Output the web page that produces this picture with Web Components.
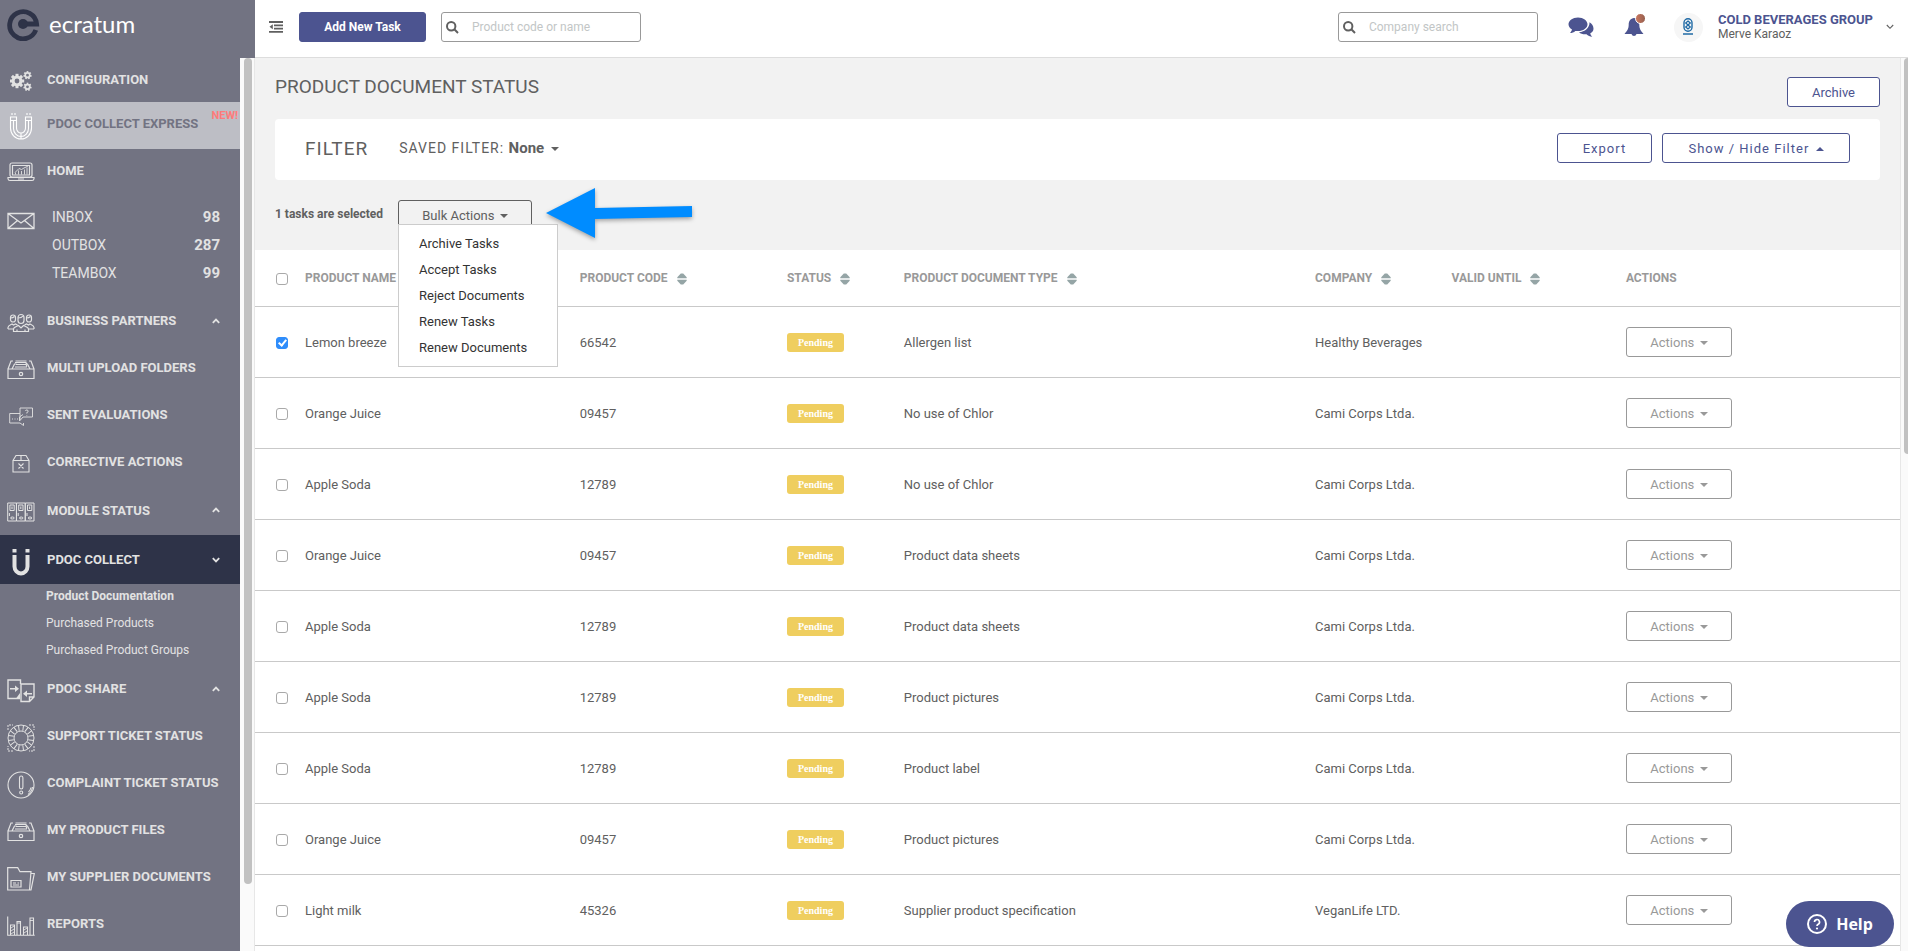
<!DOCTYPE html>
<html lang="en">
<head>
<meta charset="utf-8">
<title>Product document status</title>
<style>
  html, body { margin: 0; height: 100%; }
  body {
    font-family: Roboto, "Liberation Sans", sans-serif;
    font-size: 13px;
    color: #606060;
    overflow: hidden;
    --slate: #727382;
    --navy: #2e3348;
    --indigo: #4c5490;
    --panel: #f2f2f2;
    --line: #c9c9c9;
  }
</style>
</head>
<body>
<ecratum-app></ecratum-app>

<script>
const define = (name, html) => customElements.define(name, class extends HTMLElement {
  constructor() {
    super();
    this.attachShadow({ mode: 'open' });
  }
  connectedCallback() {
    const t = document.createElement('template');
    t.innerHTML = typeof html === 'function' ? html(this) : html;
    this.shadowRoot.replaceChildren(t.content.cloneNode(true));
  }
});

const gear = (cx, cy, r, hole, teeth, w) => {
  let s = '';
  for (let i = 0; i < teeth; i++)
    s += `<rect x="${cx - w / 2}" y="${cy - r - w * .6}" width="${w}" height="${w}" fill="currentColor" stroke="none" transform="rotate(${i * 360 / teeth} ${cx} ${cy})"/>`;
  return s + `<circle cx="${cx}" cy="${cy}" r="${(r + hole) / 2}" stroke-width="${r - hole}"/>`;
};
const drawer = '<path d="M1 9h26v9.500H1zM1 9l3-8h2M27 9l-3-8h-2M5 9l2.500-5h2M23 9l-2.500-5h-2M8 2.500h11l1 2M8.500 1h11M9 4.500h10l1 2M8 7h12" /><circle cx="14" cy="14" r="1.700"/>';
const binder = x => `<path d="M${x} 1h8.700v18h-8.700z"/><path d="M${x + 2.2} 3h4.300v5.500h-4.300zM${x + 4.3} 4.500v2.500"/><path d="M${x + 1.700} 11v3" /><ellipse cx="${x + 4.700}" cy="16" rx="1.800" ry="1"/>`;
let spokes = '';
for (let a = 0; a < 360; a += 45) spokes += `<path d="M12.200 6.800 11.500 1.500M15.800 6.800 16.500 1.500" transform="rotate(${a} 14 14)"/>`;

/* name: [width, height, stroke width, markup] */
const ICONS = {
  gears: [22, 20, 1, gear(7, 10, 5.4, 2.4, 8, 3) + gear(17.500, 4.200, 3.1, 1.400, 7, 1.700) + gear(17.500, 15.800, 3.1, 1.400, 7, 1.700)],
  magnet: [24, 28, 1.100, '<path d="M1.500 5v11a10.500 11 0 0 0 21 0V5h-6v11a4.500 5 0 0 1-9 0V5zM1.500 8.500h6M16.500 8.500h6M4.500 9v7.500a7.500 8 0 0 0 15 0V9M12 20.500V27M3 3V1M6 3V1M18 3V1M21 3V1"/>'],
  magnetSolid: [18, 28, 1, '<path d="M.500 1h4v3.500h-4zM13.500 1h4v3.500h-4z" fill="currentColor" stroke="none"/><path d="M2.500 7v11.500a6.500 7 0 0 0 13 0V7" stroke-width="4"/>'],
  laptop: [28, 20, 1.200, '<rect x="3" y="1" width="22" height="14" rx="2"/><path d="M5.500 3.500h17v9.500h-17zM1 15.500h26v1.200a2 2 0 0 1-2 1.800H3a2 2 0 0 1-2-1.800zM11 17h6"/><path d="M8 10.500l4-4 2.500 1 2.500-1.500 4-2M8.500 12.500v-2M11.500 12.500v-4M14.500 12.500v-3.500M17.500 12.500v-5M20 12.500v-7" stroke-width=".9"/>'],
  mail: [28, 18, 1.300, '<path d="M1 1.500h26v15H1zM1 1.500l13 9.500 13-9.500M1 16.500l9.500-8M27 16.500l-9.500-8"/>'],
  people: [28, 20, 1.200, '<rect x="3.500" y="2" width="5" height="7" rx="2.500"/><rect x="19.500" y="2" width="5" height="7" rx="2.500"/><rect x="11" y="1.500" width="6" height="9" rx="3"/><path d="M11 5c2 0 4-.5 5-2M3.500 5c2 0 3-.5 4-1.500M19.500 5c2 0 3-.5 4-1.500M1 16v-1.500c0-2 2-2.500 4-3.500l1.500 1 2-1 2 1M27 16v-1.500c0-2-2-2.500-4-3.500l-1.500 1-2-1-2 1M1 16h5.500M27 16h-5.500M6.500 18.500V16c0-2 3-2.500 5-3.500l2.500 2.500 2.500-2.500c2 1 5 1.500 5 3.500v2.500zM10 18v-1.500M18 18v-1.500"/>'],
  drawer: [28, 20, 1.200, drawer],
  chat: [24, 20, .9, '<path d="M11 6.500H.700v9.500H11l3.500 2.500V16M10.500 14V10L14 7.500M11 6.500V1h12.500v9H14l-3 3.500V6.500"/><path d="M3 12h1M5.500 12h1M8 12h1M16.500 4a1.300 1.300 0 1 1 1.300 1.500v1M17.800 8v.6" />'],
  box: [18, 20, 1.100, '<path d="M1 6.500h16V18H1zM1 6.500 4 1.500h10l3 5M9 1.500v5M6.500 9.500l5 5M11.500 9.500l-5 5"/>'],
  binders: [28, 20, 1, binder(.7) + binder(9.500) + binder(18.300)],
  share: [28, 24, 1.400, '<path d="M13 19.500H1V1h12.500v4M14 5h13v13l-4.500 4.500H14zM22.500 22v-4H27"/><path d="M3 9.800h6M25 14.800h-6" stroke-width="1.600"/><path d="M8 6.500v6.500l4-3.300zM20 11.500V18l-4-3.200zM13 14v5.500l-4 0z" fill="currentColor" stroke="none"/>'],
  lifebuoy: [28, 28, 1, '<circle cx="14" cy="14" r="13"/><circle cx="14" cy="14" r="7"/>' + spokes + '<path d="M1 6V1h5M22 1h5v5M27 22v5h-5M6 27H1v-5" stroke-dasharray="2 1"/>'],
  alert: [28, 28, 1.100, '<circle cx="14" cy="14" r="13"/><rect x="12.500" y="5" width="3.400" height="13" rx="1.700"/><circle cx="14.200" cy="21.500" r="1.500"/><path d="M25.500 16a11 11 0 0 1-4.500 7.500M24 16.500a9 9 0 0 1-2.500 4.500"/>'],
  folder: [28, 24, 1.200, '<path d="M.700 23V.700h10l2.300 4h11L22.500 23zM24 6.500h3.300L24 23h-1.500"/><path d="M4 13.500h10v6.500H4zM6 16h3M10.500 16h1.500M6 18h6"/>'],
  bars: [28, 20, 1.100, '<path d="M.700.500v18.800h27M3.500 19V9h4v10M10 19V5.500h3.500V19M16.500 19v-8h4v8M23 19V2h3.500v17"/><path d="M4 12l3-2M4 15l3-2M4 18l3-2M17 14l3-2M17 17l3-2M10 7h4M23 4.500h3.500" stroke-width=".9"/>'],
  up: [8, 6, 1.800, '<path d="M.8 4.800 4 1.500l3.200 3.300"/>'],
  down: [8, 6, 1.800, '<path d="M.8 1.200 4 4.500l3.200-3.300"/>'],
  thinDown: [8, 6, 1.100, '<path d="M.8 1 4 4.300 7.200 1"/>'],
  outdent: [14, 12, 1.800, '<path d="M0 1h14M5 4.300h9M5 7.600h9M0 10.900h14"/><path d="M3.800 3.300v5L.5 5.800z" fill="currentColor" stroke="none"/>'],
  search: [13, 13, 2, '<circle cx="5.200" cy="5.200" r="4.200"/><path d="M8.300 8.300 12 12"/>'],
  comments: [26, 21, 1, '<g fill="currentColor" stroke="none"><path d="M10 .5C4.700.5.500 3.500.500 7.300c0 2.200 1.400 4.100 3.500 5.300-.3 1.400-1 2.400-2 3.400 2 0 3.900-.8 5.300-2.100.900.1 1.700.2 2.700.2 5.300 0 9.500-3 9.500-6.800S15.300.5 10 .5z"/><path d="M21.500 5.300c.3 5.600-4.800 9.600-10.500 10 1.700 1.600 4.500 2.300 7.500 2 1.500 1.500 3.500 2.400 5.700 2.400-1-.9-1.700-2-2-3.200 2-1.100 3.300-2.700 3.300-4.700 0-2.700-1.500-5-4-6.500z"/></g>'],
  bell: [20, 21, 1, '<path d="M10 1c-3.300.4-5.300 3-5.300 6.500 0 4.500-1.500 6-4.200 9.500h7a2.600 2.600 0 0 0 5 0h7c-2.700-3.500-4.200-5-4.200-9.500C15.300 4 13.300 1.400 10 1z" fill="currentColor" stroke="none"/>'],
  sort: [10, 12, 1, '<path d="M.3 5.300V4.300L3.800.500h2.400l3.500 3.800v1zM.3 6.700v1l3.500 3.800h2.400l3.500-3.800v-1z" fill="currentColor" stroke="none"/>'],
  question: [20, 20, 2, '<circle cx="10" cy="10" r="9"/><path d="M7.500 8a2.500 2.500 0 1 1 3.700 2.200c-.9.500-1.200.9-1.200 1.800" stroke-width="1.700"/><circle cx="10" cy="14.500" r="1.100" fill="currentColor" stroke="none"/>'],
  brand: [34, 34, 5, '<path d="M29.800 23A13.500 13.500 0 1 1 30.600 17H17" stroke-width="4.800"/><circle cx="17" cy="17" r="5" fill="currentColor" stroke="none"/>'],
  arrow: [148, 52, 1, '<path d="M1 26 50 1v20l97-2v11l-97 2v19z" fill="#008cff" stroke="none"/>']
};

define('ui-icon', el => {
  const [w, h, sw, body] = ICONS[el.getAttribute('name')];
  return `<style>:host{display:inline-flex;flex:none}svg{display:block}</style>
  <svg width="${w}" height="${h}" viewBox="0 0 ${w} ${h}" fill="none" stroke="currentColor" stroke-width="${sw}" aria-hidden="true">${body}</svg>`;
});

define('ui-caret', `<style>
  :host { display: inline-block; width: 0; border: 4px solid transparent; border-bottom-width: 0; border-top-color: currentColor; margin-left: 2px; vertical-align: middle; }
  :host([up]) { border-top-width: 0; border-bottom: 4px solid currentColor; border-top-color: transparent; }
</style>`);

define('ui-button', `<style>
  :host { display: inline-block; }
  button {
    box-sizing: border-box; width: 100%; height: 30px; padding: 0 20px;
    border: 1px solid var(--edge, var(--indigo)); border-radius: 3px;
    background: var(--fill, #fff); color: var(--ink, var(--indigo));
    font: var(--face, 13px) Roboto, "Liberation Sans", sans-serif; letter-spacing: inherit; white-space: nowrap; cursor: pointer;
  }
</style><button type="button"><slot></slot></button>`);

define('search-field', el => `<style>
  :host { display: block; width: 200px; }
  label {
    box-sizing: border-box; display: flex; align-items: center; gap: 13px; height: 30px; padding: 0 4px;
    border: 1px solid #999; border-radius: 3px; background: #fff; color: #606060;
  }
  input { flex: 1; min-width: 0; border: 0; outline: 0; padding: 0; background: none; font: 12px Roboto, "Liberation Sans", sans-serif; color: #606060; }
  input::placeholder { color: #c2c6c6; opacity: 1; }
</style><label><ui-icon name="search"></ui-icon><input type="search" aria-label="${el.getAttribute('hint')}" placeholder="${el.getAttribute('hint')}"></label>`);

define('scroll-rail', `<style>
  :host { box-sizing: border-box; display: flex; flex: none; justify-content: center; background: #fafafa; border: 0 solid #e7e7e7; }
  :host([side]) { width: 15px; padding-left: 2px; border-right-width: 1px; }
  :host([page]) { width: 8px; border-left-width: 1px; justify-content: flex-end; }
  div { width: 8px; height: var(--thumb); border-radius: 4px; background: #c1c1c1; }
  :host([page]) div { width: 4px; border-radius: 4px 0 0 4px; }
</style><div></div>`);

define('app-header', `<style>
  :host { display: flex; flex: none; height: 58px; }
  .brand { box-sizing: border-box; display: flex; align-items: center; width: 255px; padding: 0 6px 10px; gap: 9px; background: var(--slate); color: #fff; font: 24px/32px Lato, sans-serif; text-decoration: none; }
  .brand ui-icon { color: var(--navy); }
  .bar { box-sizing: border-box; display: flex; flex: 1; align-items: center; padding: 0 14px 3px; border-bottom: 1px solid #ddd; background: #fff; }
  .add { width: 127px; margin: 0 15px 0 16px; --fill: var(--indigo); --ink: #fff; --face: bold 12px; }
  .company { margin-left: auto; }
  .icon { display: flex; padding: 0; border: 0; background: none; color: #606060; }
  .note { position: relative; margin-left: 30px; color: var(--indigo); }
  .dot { position: absolute; top: -4px; right: -2px; width: 9px; height: 9px; border: 1px solid #fff; border-radius: 50%; background: linear-gradient(90deg, #c9765e, #96604f); }
  .logo { display: flex; flex: none; align-items: center; justify-content: center; width: 29px; height: 29px; margin: 0 15px 0 30px; border-radius: 50%; background: #f6f6f6; }
  .who { font-size: 12px; line-height: 15px; white-space: nowrap; }
  .who strong { display: block; font-size: 13px; color: var(--indigo); }
  .more { margin-left: 13px; }
</style>
<a class="brand" href="#"><ui-icon name="brand"></ui-icon>ecratum</a>
<div class="bar">
  <button class="icon" aria-label="Collapse menu"><ui-icon name="outdent"></ui-icon></button>
  <ui-button class="add">Add New Task</ui-button>
  <search-field hint="Product code or name"></search-field>
  <search-field class="company" hint="Company search"></search-field>
  <button class="icon note" aria-label="Messages"><ui-icon name="comments"></ui-icon></button>
  <button class="icon note" aria-label="Notifications"><ui-icon name="bell"></ui-icon><span class="dot"></span></button>
  <span class="logo"><svg width="12" height="18" viewBox="0 0 12 18" fill="none" stroke="#1f6aa5" aria-hidden="true"><rect x="2" y=".8" width="8" height="12.500" rx="4" stroke-width="1.400"/><path d="M6 3 8.300 5 6 7 3.700 5zM6 7l2.300 2L6 11 3.700 9z" stroke-width="1.300"/><path d="M1 16h10" stroke-width="1.500"/></svg></span>
  <div class="who"><strong>COLD BEVERAGES GROUP</strong>Merve Karaoz</div>
  <button class="icon more" aria-label="Account menu"><ui-icon name="thinDown"></ui-icon></button>
</div>`);

define('nav-item', el => `<style>
  :host { display: block; height: 47px; color: #e2e2e2; font-weight: bold; }
  :host([short]) { height: 44px; }
  :host([tall]) { height: 50px; }
  :host([active]) { height: 49px; background: var(--navy); }
  :host([promo]) { background: #bdbec5; color: var(--slate); }
  a { box-sizing: border-box; display: grid; grid-template-columns: 41px 1fr auto; align-items: center; height: 100%; padding: 0 20px 0 0; color: inherit; text-decoration: none; white-space: nowrap; }
  .glyph { justify-self: center; margin-top: 4px; color: #e2e2e2; }
  :host([short]) a { padding-bottom: 2px; }
  :host([promo]) a { padding: 0 2px 4px 0; }
  :host([promo]) .glyph { color: #fff; }
  .text { padding-left: 6px; }
  .new { align-self: start; padding-top: 7px; color: #ff7b7b; font-size: 11px; }
</style><a href="#"><ui-icon class="glyph" name="${el.getAttribute('icon')}"></ui-icon><span class="text"><slot></slot></span>${
  el.hasAttribute('arrow') ? `<ui-icon name="${el.getAttribute('arrow')}"></ui-icon>` : el.hasAttribute('promo') ? '<span class="new">NEW!</span>' : ''}</a>`);

define('mail-box', `<style>
  :host { display: grid; grid-template-columns: 41px 1fr; padding: 10px 20px 10px 0; color: #e2e2e2; font-size: 14px; line-height: 28px; }
  ui-icon { justify-self: center; margin-top: 9px; align-self: start; }
  div { display: grid; padding-left: 11px; }
  a { display: flex; justify-content: space-between; color: inherit; text-decoration: none; }
  b { font-size: 15px; }
</style><ui-icon name="mail"></ui-icon>
<div><a href="#">INBOX <b>98</b></a><a href="#">OUTBOX <b>287</b></a><a href="#">TEAMBOX <b>99</b></a></div>`);

define('sub-nav', `<style>
  :host { display: grid; gap: 2px; padding: 0 0 2px 46px; font-size: 12px; line-height: 25px; }
  a { color: #e2e2e2; text-decoration: none; }
  .current { font-weight: bold; }
</style><a class="current" href="#">Product Documentation</a><a href="#">Purchased Products</a><a href="#">Purchased Product Groups</a>`);

define('side-nav', `<style>
  :host { display: block; flex: none; width: 240px; overflow: hidden; background: var(--slate); }
</style><nav>
<nav-item short icon="gears">CONFIGURATION</nav-item>
<nav-item promo icon="magnet">PDOC COLLECT EXPRESS</nav-item>
<nav-item short icon="laptop">HOME</nav-item>
<mail-box></mail-box>
<nav-item icon="people" arrow="up">BUSINESS PARTNERS</nav-item>
<nav-item icon="drawer">MULTI UPLOAD FOLDERS</nav-item>
<nav-item icon="chat">SENT EVALUATIONS</nav-item>
<nav-item icon="box">CORRECTIVE ACTIONS</nav-item>
<nav-item tall icon="binders" arrow="up">MODULE STATUS</nav-item>
<nav-item active icon="magnetSolid" arrow="down">PDOC COLLECT</nav-item>
<sub-nav></sub-nav>
<nav-item icon="share" arrow="up">PDOC SHARE</nav-item>
<nav-item icon="lifebuoy">SUPPORT TICKET STATUS</nav-item>
<nav-item icon="alert">COMPLAINT TICKET STATUS</nav-item>
<nav-item icon="drawer">MY PRODUCT FILES</nav-item>
<nav-item icon="folder">MY SUPPLIER DOCUMENTS</nav-item>
<nav-item icon="bars">REPORTS</nav-item>
</nav>`);

define('page-heading', `<style>
  :host { display: flex; justify-content: space-between; align-items: flex-start; padding: 19px 20px 12px; }
  h1 { margin: 0; font-size: 19px; font-weight: normal; line-height: 20px; }
  ui-button { width: 93px; }
</style><h1>PRODUCT DOCUMENT STATUS</h1><ui-button>Archive</ui-button>`);

define('filter-panel', `<style>
  :host { display: flex; align-items: center; height: 61px; margin: 0 20px; padding: 0 30px 3px; border-radius: 4px; background: #fff; letter-spacing: 1px; box-sizing: border-box; }
  h2 { margin: 0 31px 0 0; font-size: 19px; font-weight: normal; }
  .saved { padding: 0; border: 0; background: none; color: inherit; font: 14px Roboto, "Liberation Sans", sans-serif; letter-spacing: inherit; margin-right: auto; }
  .saved b { font-size: 15px; letter-spacing: 0; }
  .export { width: 95px; margin-right: 10px; }
  .toggle { width: 188px; }
</style><h2>FILTER</h2><button class="saved" type="button">SAVED FILTER: <b>None</b> <ui-caret></ui-caret></button>
<ui-button class="export">Export</ui-button><ui-button class="toggle">Show / Hide Filter <ui-caret up></ui-caret></ui-button>`);

define('bulk-actions', `<style>
  :host { display: flex; position: relative; z-index: 2; height: 70px; box-sizing: border-box; padding: 20px 0 0 20px; }
  strong { width: 123px; font-size: 12px; line-height: 28px; }
  .drop { position: relative; }
  ui-button { width: 134px; --edge: #606060; --fill: #f2f2f2; --ink: #606060; }
  menu {
    position: absolute; top: 24px; left: 0; box-sizing: border-box; width: 160px; margin: 0; padding: 6px 0 5px;
    border: 1px solid #ccc; background: #fff; list-style: none;
  }
  a { display: block; padding-left: 20px; color: #333; font-size: 13px; line-height: 26px; text-decoration: none; }
  .pointer { position: absolute; top: 7px; left: 290px; filter: drop-shadow(0 2px 2px #0005); }
</style><strong>1 tasks are selected</strong>
<div class="drop"><ui-button>Bulk Actions <ui-caret></ui-caret></ui-button>
<menu><li><a href="#">Archive Tasks</a></li><li><a href="#">Accept Tasks</a></li><li><a href="#">Reject Documents</a></li><li><a href="#">Renew Tasks</a></li><li><a href="#">Renew Documents</a></li></menu></div>
<ui-icon class="pointer" name="arrow"></ui-icon>`);

const TASKS = [
  ['Lemon breeze', '66542', 'Allergen list', 'Healthy Beverages'],
  ['Orange Juice', '09457', 'No use of Chlor', 'Cami Corps Ltda.'],
  ['Apple Soda', '12789', 'No use of Chlor', 'Cami Corps Ltda.'],
  ['Orange Juice', '09457', 'Product data sheets', 'Cami Corps Ltda.'],
  ['Apple Soda', '12789', 'Product data sheets', 'Cami Corps Ltda.'],
  ['Apple Soda', '12789', 'Product pictures', 'Cami Corps Ltda.'],
  ['Apple Soda', '12789', 'Product label', 'Cami Corps Ltda.'],
  ['Orange Juice', '09457', 'Product pictures', 'Cami Corps Ltda.'],
  ['Light milk', '45326', 'Supplier product specification', 'VeganLife LTD.']
];
const COLUMNS = [
  ['name', 'PRODUCT NAME'], ['code', 'PRODUCT CODE'], ['status', 'STATUS'],
  ['type', 'PRODUCT DOCUMENT TYPE'], ['company', 'COMPANY'], ['valid', 'VALID UNTIL']
];
define('task-table', `<style>
  :host { display: block; background: #fff; }
  table { width: 100%; table-layout: fixed; border-collapse: separate; border-spacing: 0; }
  th, td { box-sizing: border-box; padding: 0; border-bottom: 1px solid var(--line); text-align: left; white-space: nowrap; }
  th { height: 57px; color: #999; font-size: 12px; }
  th ui-icon { margin-left: 6px; color: #95a5a6; vertical-align: middle; }
  td { height: 71px; }
  .pick { width: 50px; padding: 2px 0 0 21px; }
  .name { width: 16.7%; } .code { width: 12.6%; } .status { width: 7.1%; } .type { width: 25%; }
  .company { width: 8.3%; } .valid { width: 10.6%; }
  input { appearance: none; display: grid; place-items: center; box-sizing: border-box; width: 12px; height: 12px; margin: 0; border: 1px solid #a9a9a9; border-radius: 3px; background: #fff; }
  input:checked { border-color: #2f8dfb; background: #2f8dfb; }
  input:checked::after { content: ""; width: 3px; height: 6px; margin-bottom: 2px; border: solid #fff; border-width: 0 2px 2px 0; transform: rotate(40deg); }
  .badge { display: inline-block; width: 57px; border-radius: 3px; background: #efce5f; color: #fff; font: bold 10px/19px "Liberation Serif", serif; text-align: center; }
  ui-button { width: 106px; --edge: #999; --ink: #999; }
</style><table>
<thead><tr><th class="pick"><input type="checkbox" aria-label="Select all tasks"></th>
${COLUMNS.map(([c, t]) => `<th scope="col" class="${c}">${t} <ui-icon name="sort"></ui-icon></th>`).join('')}<th scope="col">ACTIONS</th></tr></thead>
<tbody>${TASKS.map(([n, c, t, co], i) => `<tr><td class="pick"><input type="checkbox" aria-label="Select ${n}"${i ? '' : ' checked'}></td>
<td>${n}</td><td>${c}</td><td><span class="badge">Pending</span></td><td>${t}</td><td>${co}</td><td></td>
<td><ui-button>Actions <ui-caret></ui-caret></ui-button></td></tr>`).join('')}</tbody></table>`);

define('help-button', `<style>
  :host { position: fixed; right: 14px; bottom: 4px; z-index: 5; }
  button { display: flex; align-items: center; justify-content: center; gap: 9px; width: 108px; height: 46px; border: 0; border-radius: 23px; background: var(--indigo); color: #fff; font: bold 16px "Open Sans", sans-serif; }
</style><button type="button"><ui-icon name="question"></ui-icon>Help</button>`);

define('ecratum-app', `<style>
  :host { display: flex; flex-direction: column; height: 100vh; }
  .body { display: flex; flex: 1; min-height: 0; }
  main { flex: 1; min-width: 0; overflow: hidden; background: #fff; }
  .top { background: var(--panel); }
  .side { --thumb: 826px; }
  .page { --thumb: 396px; }
</style>
<app-header></app-header>
<div class="body">
  <side-nav></side-nav><scroll-rail side class="side"></scroll-rail>
  <main><div class="top"><page-heading></page-heading><filter-panel></filter-panel><bulk-actions></bulk-actions></div><task-table></task-table></main>
  <scroll-rail page class="page"></scroll-rail>
</div>
<help-button></help-button>`);
</script>
</body>
</html>
